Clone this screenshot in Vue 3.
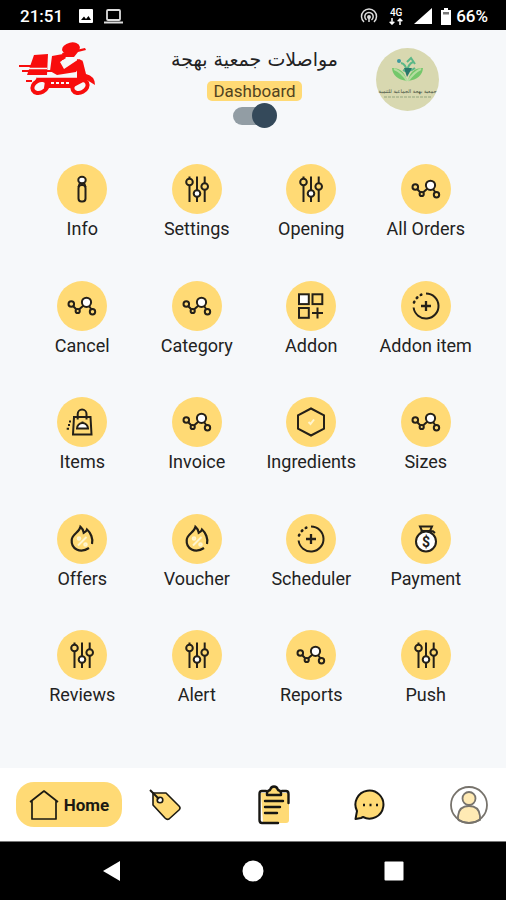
<template>
  <div class="screen">
    <svg class="sprite" aria-hidden="true">
      <symbol id="icon-info" viewBox="0 0 50 50">
        <path d="M23 18.5 L21.5 23 M27 18.5 L28.5 23" />
        <ellipse class="white" cx="25" cy="16" rx="3.7" ry="3.2" />
        <rect x="21.5" y="21" width="7" height="16.5" rx="3" />
      </symbol>
      <symbol id="icon-sliders" viewBox="0 0 50 50">
        <path d="M17.5 12.5 V38 M25 12.5 V38 M32.7 12.5 V38" />
        <circle class="yellow" cx="17.5" cy="18" r="3.3" />
        <circle class="white" cx="25" cy="29.5" r="3.3" />
        <circle class="yellow" cx="32.7" cy="22.5" r="3.3" />
      </symbol>
      <symbol id="icon-nodes" viewBox="0 0 50 50">
        <path d="M16 25 L19.5 28.5 M22 28.5 L26.5 24.5 M32 25 L34.5 28.5" />
        <circle cx="14.3" cy="23" r="2.8" />
        <circle cx="20.7" cy="30" r="2.1" />
        <circle class="white" cx="29.5" cy="21.3" r="4.6" />
        <circle cx="35.5" cy="30.7" r="2.7" />
      </symbol>
      <symbol id="icon-grid" viewBox="0 0 50 50">
        <rect class="white" x="13" y="13.3" width="9.8" height="9.8" />
        <rect x="26.5" y="13.3" width="9.8" height="9.8" />
        <rect x="13" y="27" width="9.8" height="9.8" />
        <path d="M31.5 26.5 V37.5 M26 32 H37" />
      </symbol>
      <symbol id="icon-plus" viewBox="0 0 50 50">
        <path d="M25 12.5 A12.5 12.5 0 1 1 12.6 26.5" />
        <path d="M13 21.5 L13.3 20.8 M15.8 17 L16.3 16.5 M19.8 13.9 L20.3 13.7" stroke-width="2.6" stroke-linecap="round" />
        <path d="M25 20 V30 M20 25 H30" stroke-width="2.3" />
      </symbol>
      <symbol id="icon-bag" viewBox="0 0 50 50">
        <path d="M17 20 H33.5 L34.5 37.5 H16 Z M20.7 22.5 V17 A4.4 4.4 0 0 1 29.5 17 V22.5" />
        <path class="white" d="M20 31.5 A5.5 5.5 0 0 1 31 31.5 Z" />
        <path d="M25.5 26 V24.5 M12 24.5 H14 M11 28 H13 M9.7 31.7 H12" />
      </symbol>
      <symbol id="icon-hexagon" viewBox="0 0 50 50">
        <path d="M25 11.5 L38 18.3 V31.7 L25 38.5 L12 31.7 V18.3 Z" />
        <path class="pale" d="M22.5 25 L24.5 27 L28 22.5" />
      </symbol>
      <symbol id="icon-flame" viewBox="0 0 50 50">
        <path d="M32 34 C23 40 14 34.5 14.7 26 C15 20 22.5 18.5 23.5 12.8 C25.5 14.5 26.5 16 26.8 18.8 C28.5 18 29.5 17 30 15.5 C33.5 18.5 36.5 25 35 30" stroke-width="2.2" />
        <path class="pale" d="M21 31.5 L29.5 23" />
        <circle class="pale" cx="22" cy="24.5" r="1.3" />
        <circle class="pale" cx="28.5" cy="30.5" r="1.3" />
      </symbol>
      <symbol id="icon-money" viewBox="0 0 50 50">
        <path d="M19 12.5 H31 L29 17 H21 Z M19.5 17.3 H32 L34 19" />
        <circle class="white" cx="25" cy="27.5" r="10" />
        <text class="dollar" x="25" y="32.5" text-anchor="middle">$</text>
      </symbol>
    </svg>

    <div class="status-bar">
      <span>21:51</span>
      <svg class="status-photo" viewBox="0 0 14 14">
        <rect width="14" height="14" rx="1" fill="#fff" />
        <path d="M2 11 L5 7.5 L7 10 L9.5 7 L12 11 Z" fill="#000" />
      </svg>
      <svg class="status-laptop" viewBox="0 0 19 15" fill="none" stroke="#ddd" stroke-width="1.8">
        <rect x="3" y="1" width="13" height="10" rx="1" />
        <path d="M0 13.5 H19" stroke-width="2" />
      </svg>
      <div class="status-right">
        <svg class="status-hotspot" viewBox="0 0 18 16" fill="none" stroke="#ddd" stroke-width="1.5">
          <path d="M4 14 A7.5 7.5 0 1 1 14 14 M6.5 12 A4.2 4.2 0 1 1 11.5 12" />
          <circle cx="9" cy="9" r="1.2" fill="#ddd" />
          <path d="M9 9 V14" />
        </svg>
        <div class="network">
          <span>4G</span>
          <svg viewBox="0 0 14 7" fill="none" stroke="#fff" stroke-width="1.5">
            <path d="M3 0 V6 M0.7 3.7 L3 6 L5.3 3.7 M11 7 V1 M8.7 3.3 L11 1 L13.3 3.3" />
          </svg>
        </div>
        <svg class="status-signal" viewBox="0 0 18 16"><path d="M0 16 L18 0 V16 Z" fill="#fff" /></svg>
        <svg class="status-battery" viewBox="0 0 10 17">
          <path d="M3 0 H7 V2 H10 V17 H0 V2 H3 Z" fill="#fff" />
          <path d="M2 4 H8 V6.5 H2 Z" fill="#777" />
        </svg>
        <span>66%</span>
      </div>
    </div>

    <header class="header">
      <svg class="scooter" viewBox="0 0 78 54" role="img" aria-label="Delivery scooter">
        <g fill="#f80d0d">
          <path d="M17 13 L31 12 L30 33 H10 Z" />
          <path d="M35 14 L46 12 L49 16 L43 20 L47 27 L62 17 L66 19 L59 30 L40 33 L33 29 Z" />
          <ellipse cx="54" cy="6.5" rx="9" ry="6" transform="rotate(-12 54 6.5)" />
          <path d="M45 11 L68 6 L69 8 L61 10 L57 15 L47 15 Z" />
          <path d="M60 17 L66 20 L69 32 Q78 34 78 43 L70 38 L55 46 H27 L28 39 H60 Z" />
          <path d="M20 35 H60 V39 H18 Z" />
        </g>
        <g fill="none" stroke="#f80d0d">
          <ellipse cx="23" cy="44.5" rx="8" ry="6" stroke-width="4" transform="rotate(-28 23 44.5)" />
          <ellipse cx="63" cy="44.5" rx="8" ry="6" stroke-width="4" transform="rotate(-28 63 44.5)" />
          <path d="M2 24 H22 M5 29 H36 M9 39 H15" stroke-width="2" />
        </g>
        <g fill="none" stroke="#f6f8fa">
          <path d="M9 26.5 H30 M20 35 H60 M45 19 L60 17" stroke-width="1.5" />
          <path d="M34 41 H53" stroke-width="2" stroke-dasharray="3 2" />
        </g>
      </svg>
      <div class="heading">
        <h1 class="title" dir="rtl" lang="ar">مواصلات جمعية بهجة</h1>
        <label class="dashboard-label" for="dashboard-toggle">Dashboard</label>
        <input id="dashboard-toggle" v-model="dashboardOn" class="toggle" type="checkbox" />
      </div>
      <div class="association">
        <svg viewBox="0 0 63 63" role="img" aria-label="جمعية بهجة">
          <circle cx="31.5" cy="31.5" r="31.5" fill="#d8d8b0" />
          <path d="M31 33 Q28 20 16 20 Q17 31 31 33 M32 33 Q34 20 47 20 Q46 31 32 33" fill="#74c76b" />
          <path d="M31 33 Q26 24 18 21 M32 33 Q38 24 45 21" fill="none" stroke="#b5dda0" stroke-width="2" />
          <path d="M25 15 Q30 16 31 24 Q32 16 37 14 M27 22 Q33 25 39 20 M31 14 L35 10 L39 16" fill="none" stroke="#5bb887" stroke-width="2" />
          <circle cx="23" cy="13" r="2" fill="#3d99a0" />
          <path d="M28 20 L31 29 L36 20" fill="#28776b" />
          <text class="seal-title" x="31.5" y="45" text-anchor="middle">جمعية بهجة الجماعية للتنمية</text>
          <path d="M8 49 H55" stroke="#92a47e" stroke-width="1" stroke-dasharray="3 1" />
        </svg>
      </div>
    </header>

    <main class="menu">
      <button v-for="item in items" :key="item.label" class="menu-item" type="button">
        <svg class="menu-icon" aria-hidden="true"><use :href="'#icon-' + item.icon" /></svg>
        <span class="menu-label">{{ item.label }}</span>
      </button>
    </main>

    <nav class="tab-bar">
      <a class="tab-home" href="#home">
        <svg viewBox="0 0 30 30" fill="none" stroke="#1c1a12" stroke-width="1.7" stroke-linejoin="round">
          <path d="M1 12 L15 1 L29 12 M3 11 V29 H27 V11" />
        </svg>
        <span>Home</span>
      </a>
      <a class="tab tab-tag" href="#offers" aria-label="Offers">
        <svg viewBox="0 0 32 32" fill="#ffda75" stroke="#1c1a12" stroke-width="1.6" stroke-linejoin="round">
          <path d="M4 4 L17 4 L30 17 Q32 19 30 21 L20 30 Q18 31 16 29 L4 16 Z" />
          <circle cx="11" cy="11" r="2.8" fill="#fff" />
          <path d="M1 1 L10 10" stroke-width="2" />
        </svg>
      </a>
      <a class="tab tab-orders" href="#orders" aria-label="Orders">
        <svg viewBox="0 0 32 40" fill="none" stroke="#171612" stroke-width="2.4" stroke-linecap="round" stroke-linejoin="round">
          <path d="M3 8 H31 V35 Q31 38 28 38 H5 Z" fill="#ffda75" stroke="none" />
          <path d="M8 6 H4 Q1.5 6 1.5 9 V35 Q1.5 38 4 38 H20 M24 6 H28 Q30.5 6 30.5 9 V18" />
          <path d="M9 10 V8 Q9 6 12 5 Q13 1.5 16 1.5 Q19 1.5 20 5 Q23 6 23 8 V10 Z" fill="#ffda75" />
          <path d="M7 16 H25 M7 22 H22 M7 28 H19" />
        </svg>
      </a>
      <a class="tab" href="#chat" aria-label="Chat">
        <svg viewBox="0 0 32 32" fill="#ffda75" stroke="#171612" stroke-width="2" stroke-linejoin="round">
          <path d="M1.5 30 L3 22 A14 14 0 1 1 9 28 L7 29 Z" />
          <path d="M9 16 H11 M15.5 16 H17.5 M22 16 H24" stroke-width="2.4" />
        </svg>
      </a>
      <a class="tab tab-profile" href="#profile" aria-label="Profile">
        <svg viewBox="0 0 38 38" fill="none" stroke="#77736c" stroke-width="1.8">
          <path d="M8 34 V30 Q9 20 19 20 Q29 20 30 30 V34 Q19 40 8 34" fill="#ffeab4" />
          <circle cx="19" cy="12.5" r="6.5" fill="#ffeab4" />
          <circle cx="19" cy="19" r="18" />
        </svg>
      </a>
    </nav>

    <div class="system-bar">
      <button type="button" aria-label="Back">
        <svg viewBox="0 0 22 22"><path d="M2 11 L19 1 V21 Z" /></svg>
      </button>
      <button type="button" aria-label="Home screen">
        <svg viewBox="0 0 22 22"><circle cx="11" cy="11" r="10.5" /></svg>
      </button>
      <button type="button" aria-label="Recent apps">
        <svg viewBox="0 0 22 22"><rect x="1.5" y="1.5" width="19" height="19" rx="1" /></svg>
      </button>
    </div>
  </div>
</template>

<script setup>
import { ref } from 'vue';

const dashboardOn = ref(true);

const items = [
  { label: 'Info', icon: 'info' },
  { label: 'Settings', icon: 'sliders' },
  { label: 'Opening', icon: 'sliders' },
  { label: 'All Orders', icon: 'nodes' },
  { label: 'Cancel', icon: 'nodes' },
  { label: 'Category', icon: 'nodes' },
  { label: 'Addon', icon: 'grid' },
  { label: 'Addon item', icon: 'plus' },
  { label: 'Items', icon: 'bag' },
  { label: 'Invoice', icon: 'nodes' },
  { label: 'Ingredients', icon: 'hexagon' },
  { label: 'Sizes', icon: 'nodes' },
  { label: 'Offers', icon: 'flame' },
  { label: 'Voucher', icon: 'flame' },
  { label: 'Scheduler', icon: 'plus' },
  { label: 'Payment', icon: 'money' },
  { label: 'Reviews', icon: 'sliders' },
  { label: 'Alert', icon: 'sliders' },
  { label: 'Reports', icon: 'nodes' },
  { label: 'Push', icon: 'sliders' }
];
</script>

<style>
body {
  margin: 0;
  background-color: #f6f8fa;
}
</style>

<style scoped>
.screen {
  display: flex;
  flex-direction: column;
  min-height: 100vh;
  background-color: #f6f8fa;
  color: #222;
  font-family: Roboto, "Liberation Sans", sans-serif;
}
.screen svg {
  display: block;
}
.screen .sprite {
  display: none;
}
button {
  padding: 0;
  border: 0;
  background: none;
  color: inherit;
  font: inherit;
}
.status-bar {
  display: flex;
  align-items: center;
  height: 30px;
  padding: 2px 18px 0 20px;
  box-sizing: border-box;
  background-color: #000;
  color: #fff;
  font-size: 17px;
  font-weight: 500;
  line-height: 28px;
}
.status-photo {
  width: 14px;
  height: 14px;
  margin-left: 16px;
}
.status-laptop {
  width: 19px;
  height: 15px;
  margin-left: 11px;
}
.status-right {
  display: flex;
  align-items: center;
  margin-left: auto;
}
.status-hotspot {
  width: 18px;
  height: 16px;
}
.network {
  display: flex;
  flex-direction: column;
  align-items: center;
  width: 16px;
  margin: 0 10px;
  font-size: 10px;
  line-height: 10px;
}
.network svg {
  width: 14px;
  height: 7px;
}
.status-signal {
  width: 18px;
  height: 16px;
  margin-right: 9px;
}
.status-battery {
  width: 10px;
  height: 17px;
  margin-right: 5px;
}
.header {
  display: grid;
  grid-template-columns: 1fr auto 1fr;
  align-items: start;
  height: 134px;
  padding: 12px 14px 0 17px;
  box-sizing: border-box;
}
.scooter {
  width: 78px;
  height: 54px;
}
.heading {
  display: flex;
  flex-direction: column;
  align-items: center;
}
.title {
  margin: 0;
  font-family: "DejaVu Sans", sans-serif;
  font-size: 19px;
  font-weight: 400;
  line-height: 34px;
  white-space: nowrap;
}
.dashboard-label {
  margin: 5px 0 2px;
  padding: 0 6px;
  border-radius: 5px;
  background-color: #ffda75;
  color: #51431f;
  font-size: 17px;
  line-height: 20px;
}
.toggle {
  position: relative;
  width: 44px;
  height: 25px;
  margin: 0;
  appearance: none;
}
.toggle::before {
  content: "";
  display: block;
  width: 40px;
  height: 18px;
  margin-top: 4px;
  border-radius: 9px;
  background-color: #929da4;
}
.toggle::after {
  content: "";
  position: absolute;
  top: 0;
  left: 0;
  width: 25px;
  height: 25px;
  border-radius: 50%;
  background-color: #34495a;
}
.toggle:checked::after {
  left: auto;
  right: 0;
}
.association {
  padding: 6px 0 0 38px;
}
.association svg {
  width: 63px;
  height: 63px;
}
.seal-title {
  fill: #38483a;
  font-family: "DejaVu Sans", sans-serif;
  font-size: 5px;
}
.menu {
  display: grid;
  flex: 1;
  grid-template-columns: repeat(4, 1fr);
  align-content: space-between;
  row-gap: 24px;
  padding: 0 23px 61px 25px;
}
.menu-item {
  display: flex;
  flex-direction: column;
  align-items: center;
}
.menu-icon {
  width: 50px;
  height: 50px;
  border-radius: 50%;
  background-color: #ffda75;
  fill: none;
  stroke: #242018;
  stroke-width: 2;
}
.white {
  fill: #fff;
}
.yellow {
  fill: #ffda75;
}
.pale {
  stroke: #fff5cf;
}
.dollar {
  fill: #242018;
  stroke: none;
  font-size: 14px;
  font-weight: 700;
}
.menu-label {
  margin-top: 3px;
  font-size: 18px;
  line-height: 24px;
  white-space: nowrap;
}
.tab-bar {
  display: flex;
  align-items: center;
  justify-content: space-between;
  height: 74px;
  padding: 0 18px 0 16px;
  box-sizing: border-box;
  border-bottom: 1px solid #777;
  background-color: #fff;
}
.tab-home {
  display: flex;
  align-items: center;
  justify-content: center;
  gap: 5px;
  width: 106px;
  height: 45px;
  border-radius: 18px;
  background-color: #ffda75;
  color: #1c1a12;
  font-size: 17px;
  font-weight: 700;
  text-decoration: none;
}
.tab-home svg {
  width: 30px;
  height: 30px;
}
.tab svg {
  width: 32px;
  height: 32px;
}
.tab-tag {
  margin-right: 12px;
  margin-left: -37px;
}
.tab-orders svg {
  height: 40px;
}
.tab-profile svg {
  width: 38px;
  height: 38px;
}
.system-bar {
  display: grid;
  grid-template-columns: repeat(3, 1fr);
  align-items: center;
  justify-items: center;
  height: 58px;
  padding: 0 42px;
  background-color: #000;
}
.system-bar svg {
  width: 22px;
  height: 22px;
  fill: #fff;
}
</style>
